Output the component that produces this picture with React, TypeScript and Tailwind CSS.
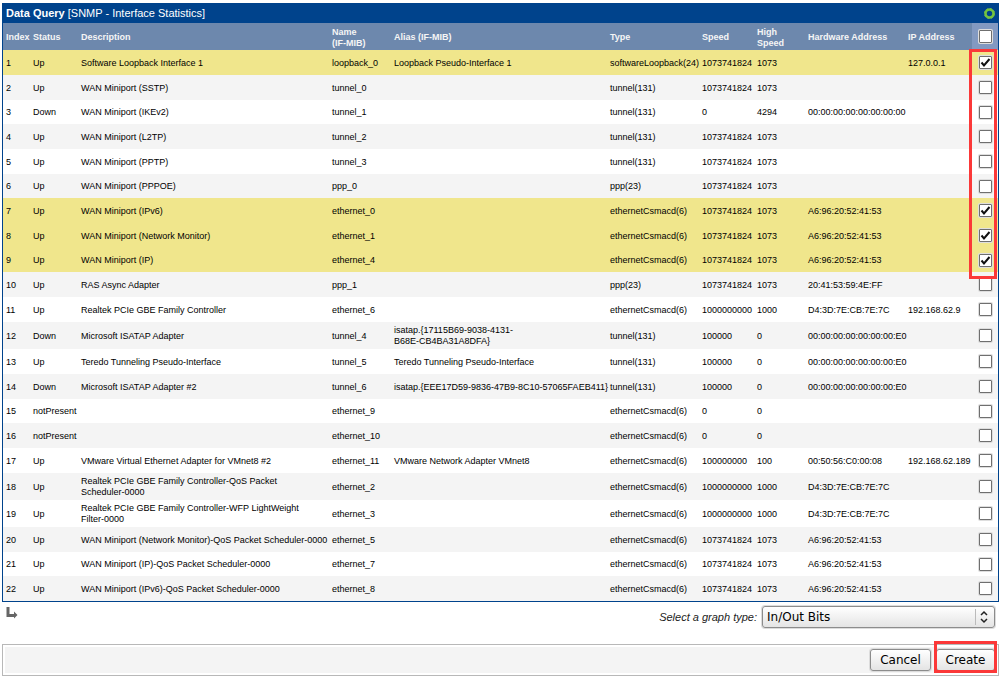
import React, { useState } from 'react';

type Row = {
  status: string;
  description: string;
  name: string;
  alias?: string;
  type: string;
  speed: string;
  highSpeed: string;
  hardware?: string;
  ip?: string;
};

const columns = [
  { label: 'Index', width: 'w-[27px]' },
  { label: 'Status', width: 'w-12' },
  { label: 'Description', width: '' },
  { label: 'Name\n(IF-MIB)', width: 'w-[62px]' },
  { label: 'Alias (IF-MIB)', width: 'w-[216px]' },
  { label: 'Type', width: 'w-[92px]' },
  { label: 'Speed', width: 'w-[55px]' },
  { label: 'High\nSpeed', width: 'w-[51px]' },
  { label: 'Hardware Address', width: 'w-[100px]' },
  { label: 'IP Address', width: 'w-16' },
];

const rows: Row[] = [
  { status: 'Up', description: 'Software Loopback Interface 1', name: 'loopback_0', alias: 'Loopback Pseudo-Interface 1', type: 'softwareLoopback(24)', speed: '1073741824', highSpeed: '1073', ip: '127.0.0.1' },
  { status: 'Up', description: 'WAN Miniport (SSTP)', name: 'tunnel_0', type: 'tunnel(131)', speed: '1073741824', highSpeed: '1073' },
  { status: 'Down', description: 'WAN Miniport (IKEv2)', name: 'tunnel_1', type: 'tunnel(131)', speed: '0', highSpeed: '4294', hardware: '00:00:00:00:00:00:00:00' },
  { status: 'Up', description: 'WAN Miniport (L2TP)', name: 'tunnel_2', type: 'tunnel(131)', speed: '1073741824', highSpeed: '1073' },
  { status: 'Up', description: 'WAN Miniport (PPTP)', name: 'tunnel_3', type: 'tunnel(131)', speed: '1073741824', highSpeed: '1073' },
  { status: 'Up', description: 'WAN Miniport (PPPOE)', name: 'ppp_0', type: 'ppp(23)', speed: '1073741824', highSpeed: '1073' },
  { status: 'Up', description: 'WAN Miniport (IPv6)', name: 'ethernet_0', type: 'ethernetCsmacd(6)', speed: '1073741824', highSpeed: '1073', hardware: 'A6:96:20:52:41:53' },
  { status: 'Up', description: 'WAN Miniport (Network Monitor)', name: 'ethernet_1', type: 'ethernetCsmacd(6)', speed: '1073741824', highSpeed: '1073', hardware: 'A6:96:20:52:41:53' },
  { status: 'Up', description: 'WAN Miniport (IP)', name: 'ethernet_4', type: 'ethernetCsmacd(6)', speed: '1073741824', highSpeed: '1073', hardware: 'A6:96:20:52:41:53' },
  { status: 'Up', description: 'RAS Async Adapter', name: 'ppp_1', type: 'ppp(23)', speed: '1073741824', highSpeed: '1073', hardware: '20:41:53:59:4E:FF' },
  { status: 'Up', description: 'Realtek PCIe GBE Family Controller', name: 'ethernet_6', type: 'ethernetCsmacd(6)', speed: '1000000000', highSpeed: '1000', hardware: 'D4:3D:7E:CB:7E:7C', ip: '192.168.62.9' },
  { status: 'Down', description: 'Microsoft ISATAP Adapter', name: 'tunnel_4', alias: 'isatap.{17115B69-9038-4131-\nB68E-CB4BA31A8DFA}', type: 'tunnel(131)', speed: '100000', highSpeed: '0', hardware: '00:00:00:00:00:00:00:E0' },
  { status: 'Up', description: 'Teredo Tunneling Pseudo-Interface', name: 'tunnel_5', alias: 'Teredo Tunneling Pseudo-Interface', type: 'tunnel(131)', speed: '100000', highSpeed: '0', hardware: '00:00:00:00:00:00:00:E0' },
  { status: 'Down', description: 'Microsoft ISATAP Adapter #2', name: 'tunnel_6', alias: 'isatap.{EEE17D59-9836-47B9-8C10-57065FAEB411}', type: 'tunnel(131)', speed: '100000', highSpeed: '0', hardware: '00:00:00:00:00:00:00:E0' },
  { status: 'notPresent', description: '', name: 'ethernet_9', type: 'ethernetCsmacd(6)', speed: '0', highSpeed: '0' },
  { status: 'notPresent', description: '', name: 'ethernet_10', type: 'ethernetCsmacd(6)', speed: '0', highSpeed: '0' },
  { status: 'Up', description: 'VMware Virtual Ethernet Adapter for VMnet8 #2', name: 'ethernet_11', alias: 'VMware Network Adapter VMnet8', type: 'ethernetCsmacd(6)', speed: '100000000', highSpeed: '100', hardware: '00:50:56:C0:00:08', ip: '192.168.62.189' },
  { status: 'Up', description: 'Realtek PCIe GBE Family Controller-QoS Packet\nScheduler-0000', name: 'ethernet_2', type: 'ethernetCsmacd(6)', speed: '1000000000', highSpeed: '1000', hardware: 'D4:3D:7E:CB:7E:7C' },
  { status: 'Up', description: 'Realtek PCIe GBE Family Controller-WFP LightWeight\nFilter-0000', name: 'ethernet_3', type: 'ethernetCsmacd(6)', speed: '1000000000', highSpeed: '1000', hardware: 'D4:3D:7E:CB:7E:7C' },
  { status: 'Up', description: 'WAN Miniport (Network Monitor)-QoS Packet Scheduler-0000', name: 'ethernet_5', type: 'ethernetCsmacd(6)', speed: '1073741824', highSpeed: '1073', hardware: 'A6:96:20:52:41:53' },
  { status: 'Up', description: 'WAN Miniport (IP)-QoS Packet Scheduler-0000', name: 'ethernet_7', type: 'ethernetCsmacd(6)', speed: '1073741824', highSpeed: '1073', hardware: 'A6:96:20:52:41:53' },
  { status: 'Up', description: 'WAN Miniport (IPv6)-QoS Packet Scheduler-0000', name: 'ethernet_8', type: 'ethernetCsmacd(6)', speed: '1073741824', highSpeed: '1073', hardware: 'A6:96:20:52:41:53' },
];

const buttonClass =
  'h-[22px] rounded-[3px] border border-[#8c8c8c] bg-linear-to-b from-white to-[#e4e4e4] text-[12px] leading-5 text-black shadow-[0_0_0_1px_#dcdcdc]';

type CheckProps = { label: string; checked: boolean; onChange: () => void };

const Check: React.FC<CheckProps> = ({ label, checked, onChange }) => (
  <label className="relative mx-auto block size-[13px]">
    <input
      type="checkbox"
      aria-label={label}
      checked={checked}
      onChange={onChange}
      className="block size-[13px] appearance-none rounded-[1px] border border-[#6f6f6f] bg-white shadow-[0_0_0_1px_#dedede]"
    />
    {checked && (
      <svg viewBox="0 0 13 13" className="pointer-events-none absolute inset-0 size-[13px]">
        <path d="M2.5 6.5 L5 9.5 L10.5 3" fill="none" stroke="#111" strokeWidth="2" />
      </svg>
    )}
  </label>
);

export default function App() {
  const [selected, setSelected] = useState<number[]>([0, 6, 7, 8]);

  const toggle = (i: number) =>
    setSelected(selected.includes(i) ? selected.filter((n) => n !== i) : [...selected, i]);

  const toggleAll = () =>
    setSelected(selected.length === rows.length ? [] : rows.map((_, i) => i));

  return (
    <main className="bg-white pt-[3px] pr-1 pl-0.5 font-['Liberation_Sans',Arial,sans-serif] text-black">
      <section className="border border-[#00438c]">
        <header className="flex h-[19px] items-center justify-between bg-[#00438c] pr-[3px] pl-[3px] text-[11px] text-white">
          <h1>
            <strong>Data Query</strong> [SNMP - Interface Statistics]
          </h1>
          <button type="button" aria-label="Reload query" className="size-[11px]">
            <svg viewBox="0 0 11 11" className="size-[11px]">
              <circle cx="5.5" cy="5.5" r="4" fill="none" stroke="#75c340" strokeWidth="2.6" />
              <circle cx="5.5" cy="5.5" r="5" fill="none" stroke="#75c340" strokeWidth="1" strokeDasharray="2 1.93" />
            </svg>
          </button>
        </header>

        <table className="w-full table-fixed border-collapse text-[9px] leading-[11px]">
          <thead>
            <tr className="h-[27px] bg-[#6d88ad] text-left text-[#f5f5f5]">
              {columns.map((col) => (
                <th key={col.label} className={`${col.width} pt-0.5 pr-0 pb-0 pl-[3px] font-bold whitespace-pre`}>
                  {col.label}
                </th>
              ))}
              <th className="w-[3px] p-0"></th>
              <th className="w-[26px] bg-[#8299c1] p-0">
                <Check label="Select all" checked={selected.length === rows.length} onChange={toggleAll} />
              </th>
            </tr>
          </thead>
          <tbody>
            {rows.map((row, i) => {
              const cells = [
                String(i + 1), row.status, row.description, row.name, row.alias,
                row.type, row.speed, row.highSpeed, row.hardware, row.ip,
              ];
              return (
                <tr
                  key={row.name}
                  className={`h-[25px] nth-[3n]:h-6 ${
                    selected.includes(i) ? 'bg-[#f0e68c]' : 'odd:bg-white even:bg-[#f4f4f4]'
                  }`}
                >
                  {cells.map((cell, c) => (
                    <td key={c} className="pt-[3px] pr-0 pb-0.5 pl-[3px] whitespace-pre">
                      {cell}
                    </td>
                  ))}
                  <td className="p-0"></td>
                  <td className="relative p-0">
                    <Check label={`Select ${row.name}`} checked={selected.includes(i)} onChange={() => toggle(i)} />
                    {i === 0 && (
                      <span className="pointer-events-none absolute -top-px -left-[3px] z-10 h-[230px] w-7 border-3 border-[#fb3838]"></span>
                    )}
                  </td>
                </tr>
              );
            })}
          </tbody>
        </table>
      </section>

      <div className="flex items-start justify-between pt-1 pr-1 pl-1">
        <svg viewBox="0 0 12 13" className="h-[13px] w-3">
          <path d="M0.5 1 H3.5 V8 H8 V5.5 L11.5 9 L8 12.5 V11 H0.5 Z" fill="#666" />
        </svg>
        <div className="flex items-center gap-[5px]">
          <label htmlFor="graph-type" className="text-[11px] text-[#222] italic">
            Select a graph type:
          </label>
          <div className="relative">
            <select
              id="graph-type"
              className={`${buttonClass} block w-[233px] appearance-none pl-1 font-['DejaVu_Sans',sans-serif]`}
            >
              <option>In/Out Bits</option>
            </select>
            <svg viewBox="0 0 20 20" className="pointer-events-none absolute top-px right-px size-5">
              <path d="M1.5 2 V18" stroke="#bbb" />
              <path d="M7 8 L10 5 L13 8 M7 12 L10 15 L13 12" fill="none" stroke="#222" strokeWidth="1.5" />
            </svg>
          </div>
        </div>
      </div>

      <footer className="mt-4 border border-[#b8b8b8] p-0.5">
        <div className="flex items-center justify-end gap-[5px] bg-[#f4f4f4] py-0.5 pr-px">
          <button type="button" className={`${buttonClass} w-[61px] font-['DejaVu_Sans',sans-serif]`}>
            Cancel
          </button>
          <div className="relative">
            <button type="button" className={`${buttonClass} block w-[59px] font-['DejaVu_Sans',sans-serif]`}>
              Create
            </button>
            <span className="pointer-events-none absolute -inset-x-0.5 -top-2 -bottom-0.5 border-3 border-[#fb3838]"></span>
          </div>
        </div>
      </footer>
    </main>
  );
}
